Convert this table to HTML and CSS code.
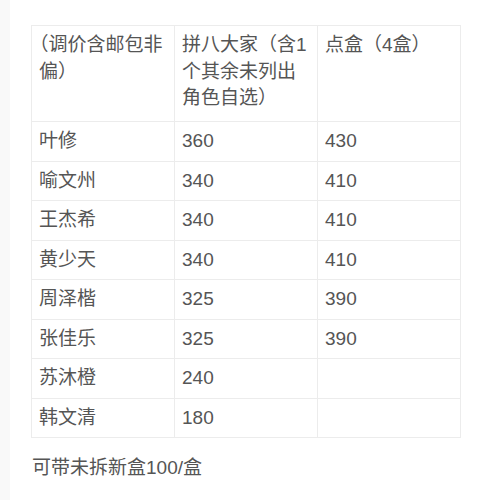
FILE: index.html
```html
<!DOCTYPE html>
<html lang="zh-CN">
<head>
<meta charset="utf-8">
<link rel="stylesheet" href="styles.css">
</head>
<body>
<div class="page">
  <table class="price">
    <thead>
      <tr>
        <th>（调价含邮包非偏）</th>
        <th>拼八大家（含1个其余未列出角色自选）</th>
        <th>点盒（4盒）</th>
      </tr>
    </thead>
    <tbody>
      <tr><td>叶修</td><td>360</td><td>430</td></tr>
      <tr><td>喻文州</td><td>340</td><td>410</td></tr>
      <tr><td>王杰希</td><td>340</td><td>410</td></tr>
      <tr><td>黄少天</td><td>340</td><td>410</td></tr>
      <tr><td>周泽楷</td><td>325</td><td>390</td></tr>
      <tr><td>张佳乐</td><td>325</td><td>390</td></tr>
      <tr><td>苏沐橙</td><td>240</td><td></td></tr>
      <tr><td>韩文清</td><td>180</td><td></td></tr>
    </tbody>
  </table>
  <p class="note">可带未拆新盒100/盒</p>
</div>
</body>
</html>
```
FILE: styles.css
```css
html, body {
  margin: 0;
  padding: 0;
  background: #ffffff;
}
body {
  font-family: "Liberation Sans", "Noto Sans CJK SC", sans-serif;
  color: #555555;
  font-size: 19px;
}
.page {
  padding: 25px 0 0 21px;
  border-left: 10px solid #f9f9f9;
  min-height: 475px;
}
.price {
  border-collapse: collapse;
  width: 430px;
  table-layout: fixed;
}
.price th,
.price td {
  border: 1px solid #ececec;
  text-align: left;
  vertical-align: top;
  font-weight: normal;
  line-height: 26.5px;
  padding: 6px 7px;
  text-spacing-trim: trim-start;
}
.price th {
  padding-bottom: 9.5px;
}
.note {
  margin: 17px 0 0 1px;
  line-height: 26.5px;
}
```
